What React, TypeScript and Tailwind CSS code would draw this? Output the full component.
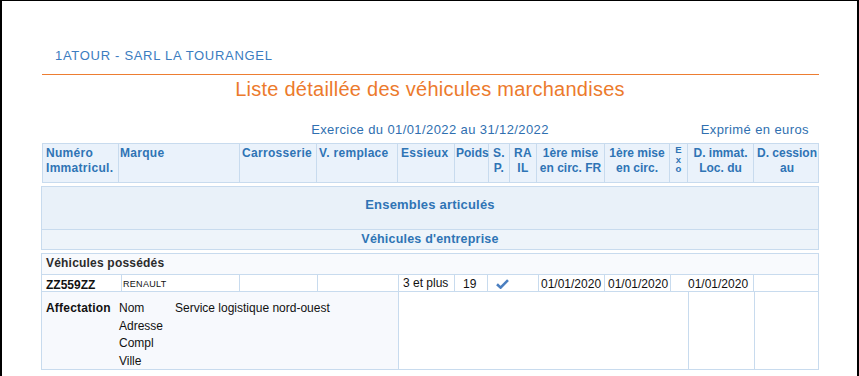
const font = "font-['Liberation_Sans',Arial,sans-serif]";

function Check() {
  return (
    <svg width="13" height="10" viewBox="0 0 13 10" className="block">
      <path d="M1 5.2 L4.6 8.6 L12 1.2" fill="none" stroke="#4b7fc0" strokeWidth="2.6" strokeLinejoin="miter" />
    </svg>
  );
}

export default function App() {
  return (
    <div className={`${font} h-[376px] w-[859px] overflow-hidden border-l-2 border-r-2 border-t border-black bg-white`}>
      <div className="ml-[39px] w-[778px] pt-[47px]">
        <div className="ml-[1px] pl-[13px] text-[13px] leading-[16px] tracking-[0.7px] text-[#3b7cc0]">
          1ATOUR - SARL LA TOURANGEL
        </div>
        <div className="ml-[1px] mt-[10px] h-px w-[777px] bg-[#ed7d31]" />
        <div className="mt-[2px] text-center text-[20px] leading-[24px] tracking-[0.25px] text-[#ec7a2c]">
          Liste détaillée des véhicules marchandises
        </div>

        <div className="mt-[21px] grid grid-cols-[1fr_auto_1fr] text-[13px] leading-[16px] tracking-[0.4px] text-[#2f6fb0]">
          <div />
          <div>Exercice du 01/01/2022 au 31/12/2022</div>
          <div className="pr-[10px] text-right">Exprimé en euros</div>
        </div>

        {/* column headers */}
        <div className="ml-[1px] mt-[5px] grid h-[40px] grid-cols-[76px_121px_77px_81px_57px_34px_21px_27px_68px_65px_18px_66px_66px] border border-[#c8dbee] bg-[#eaf2fb] text-[12px] font-bold leading-[15px] tracking-[0.3px] text-[#2f74b5]">
          <div className="border-r border-[#c8dbee] pl-[3px] pt-[2px]">Numéro Immatricul.</div>
          <div className="border-r border-[#c8dbee] pl-[1px] pt-[2px]">Marque</div>
          <div className="border-r border-[#c8dbee] pl-[2px] pt-[2px]">Carrosserie</div>
          <div className="border-r border-[#c8dbee] pl-[2px] pt-[2px]">V. remplace</div>
          <div className="border-r border-[#c8dbee] pl-[3px] pt-[2px]">Essieux</div>
          <div className="border-r border-[#c8dbee] pl-[1px] pt-[2px] tracking-normal">Poids</div>
          <div className="border-r border-[#c8dbee] pt-[2px] text-center">
            S.
            <br />
            P.
          </div>
          <div className="border-r border-[#c8dbee] pt-[2px] text-center">
            RA
            <br />
            IL
          </div>
          <div className="whitespace-nowrap border-r border-[#c8dbee] pt-[2px] text-center tracking-normal">
            1ère mise
            <br />
            en circ. FR
          </div>
          <div className="whitespace-nowrap border-r border-[#c8dbee] pt-[2px] text-center tracking-normal">
            1ère mise
            <br />
            en circ.
          </div>
          <div className="flex flex-col items-center border-r border-[#c8dbee] pt-[1px] text-[9.5px] leading-[9.5px]">
            <span>E</span>
            <span>x</span>
            <span>o</span>
          </div>
          <div className="whitespace-nowrap border-r border-[#c8dbee] pt-[2px] text-center tracking-normal">
            D. immat.
            <br />
            Loc. du
          </div>
          <div className="whitespace-nowrap pt-[2px] text-center tracking-normal">
            D. cession
            <br />
            au
          </div>
        </div>

        {/* section */}
        <div className="mt-[3px] border border-[#c8dbee] font-bold text-[#2f74b5]">
          <div className="h-[43px] border-b border-[#c8dbee] bg-[#e9f1f9] pt-[10px] text-center text-[13px] leading-[16px] tracking-[0.2px]">
            Ensembles articulés
          </div>
          <div className="h-[19px] bg-[#eef4fa] pt-[2px] text-center text-[12.5px] leading-[15px] tracking-[0.2px]">
            Véhicules d'entreprise
          </div>
        </div>

        <div className="mt-[3px] border border-[#c8dbee] text-[12px] text-[#111]">
          <div className="h-[21px] border-b border-[#c8dbee] bg-[#f8fafd] pl-[4px] pt-[2px] font-bold leading-[15px] tracking-[0.2px] text-[#2b2b2b]">
            Véhicules possédés
          </div>

          <div className="flex h-[17px] border-b border-[#c8dbee] leading-[14px]">
            <div className="w-[80px] shrink-0 border-r border-[#c8dbee] pl-[4px] pt-[3px] font-bold">ZZ559ZZ</div>
            <div className="w-[118px] shrink-0 border-r border-[#c8dbee] pl-[1px] pt-[2px] text-[9px] tracking-[0.3px]">RENAULT</div>
            <div className="w-[78px] shrink-0 border-r border-[#c8dbee]" />
            <div className="w-[81px] shrink-0 border-r border-[#c8dbee]" />
            <div className="w-[56px] shrink-0 border-r border-[#c8dbee] pl-[4px] pt-[1px]">3 et plus</div>
            <div className="w-[33px] shrink-0 border-r border-[#c8dbee] pl-[8px] pt-[2px]">19</div>
            <div className="w-[51px] shrink-0 border-r border-[#c8dbee] pl-[8px] pt-[4px]">
              <Check />
            </div>
            <div className="w-[66px] shrink-0 border-r border-[#c8dbee] pl-[2px] pt-[2px]">01/01/2020</div>
            <div className="w-[66px] shrink-0 border-r border-[#c8dbee] pl-[3px] pt-[2px]">01/01/2020</div>
            <div className="w-[83px] shrink-0 border-r border-[#c8dbee] pl-[17px] pt-[2px]">01/01/2020</div>
            <div className="flex-1" />
          </div>

          <div className="flex h-[77px] leading-[17.5px]">
            <div className="flex w-[357px] shrink-0 border-r border-[#c8dbee] bg-[#f7f9fd] pl-[4px] pt-[8px]">
              <div className="w-[73px] shrink-0 font-bold tracking-[0.2px]">Affectation</div>
              <div className="w-[56px] shrink-0">
                <div>Nom</div>
                <div>Adresse</div>
                <div>Compl</div>
                <div>Ville</div>
              </div>
              <div>Service logistique nord-ouest</div>
            </div>
            <div className="w-[290px] shrink-0 border-r border-[#c8dbee]" />
            <div className="w-[66px] shrink-0 border-r border-[#c8dbee]" />
            <div className="flex-1" />
          </div>
        </div>
      </div>
    </div>
  );
}
